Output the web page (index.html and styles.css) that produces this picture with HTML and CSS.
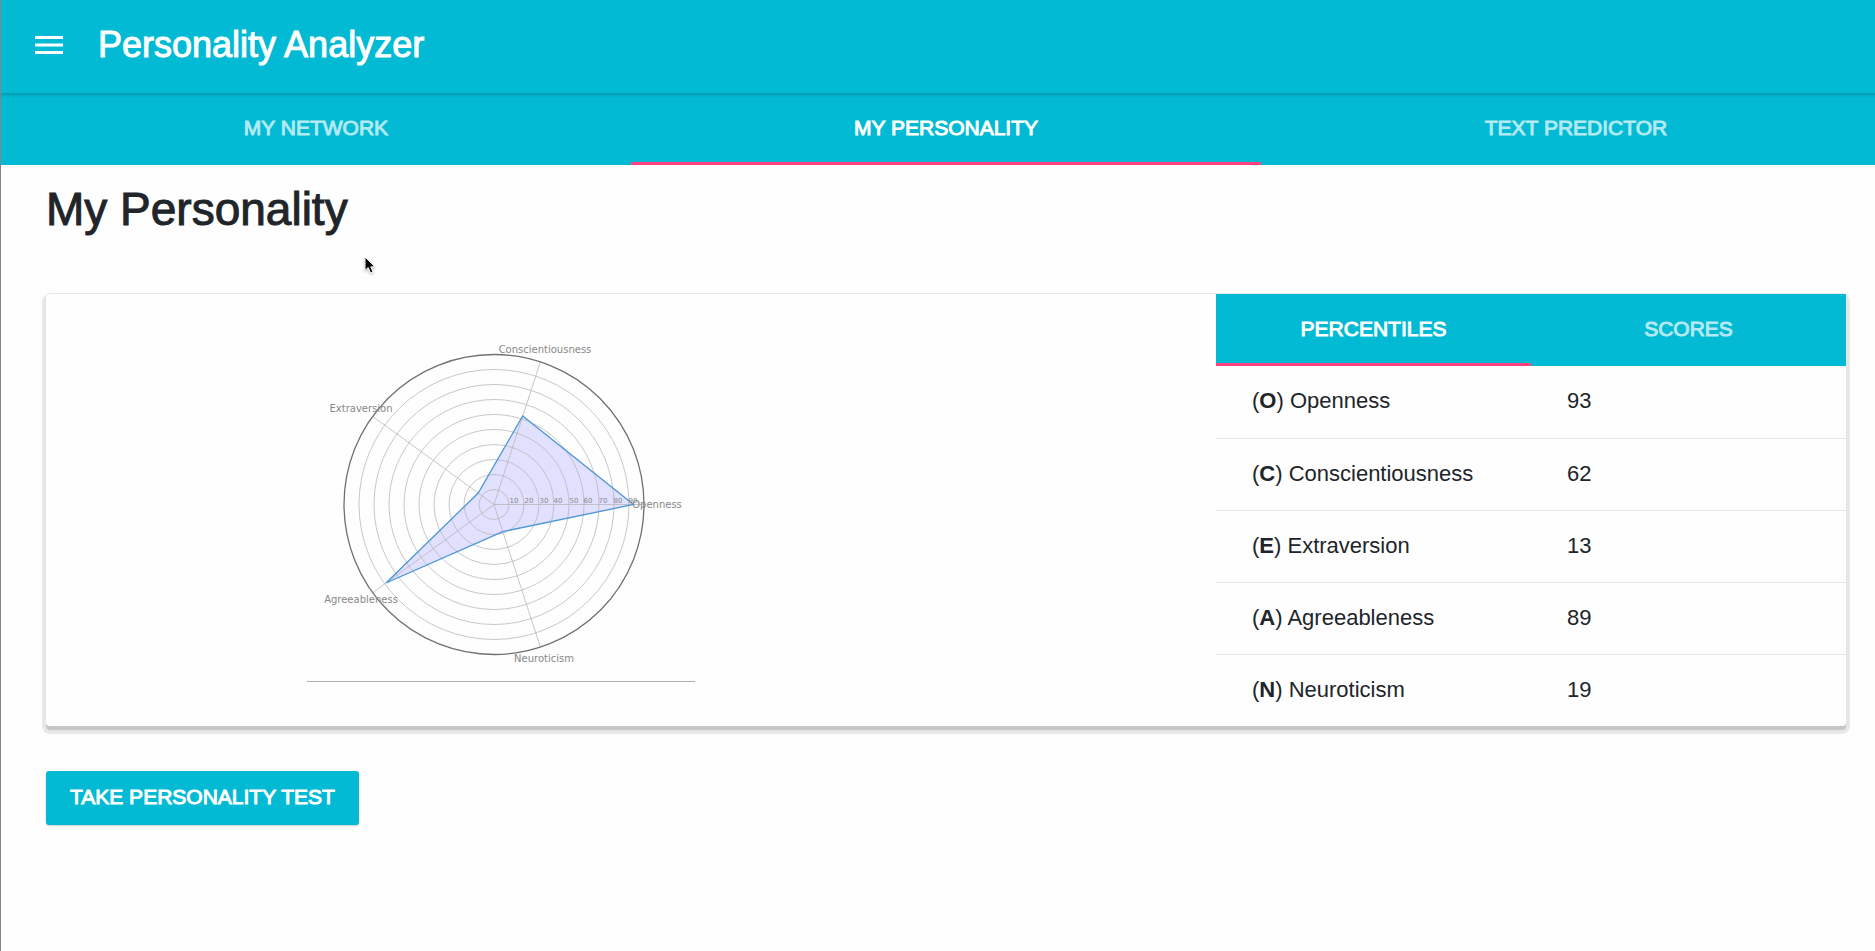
FILE: index.html
```html
<!DOCTYPE html>
<html lang="en">
<head>
<meta charset="utf-8">
<title>Personality Analyzer</title>
<link rel="stylesheet" href="styles.css">
</head>
<body>
<div class="app">
  <header class="app-bar">
    <button class="menu-button" type="button" aria-label="Menu">
      <svg width="28" height="18" viewBox="0 0 28 18" aria-hidden="true"><path d="M0 0h28v3H0zM0 7.500h28v3H0zM0 15h28v3H0z" fill="#fff"/></svg>
    </button>
    <span class="app-title">Personality Analyzer</span>
  </header>
  <nav class="tabs" role="tablist">
    <button class="tab" role="tab" type="button">MY NETWORK</button>
    <button class="tab active" role="tab" type="button" aria-selected="true">MY PERSONALITY</button>
    <button class="tab" role="tab" type="button">TEXT PREDICTOR</button>
  </nav>
  <main class="page">
    <h1 class="page-title">My Personality</h1>
    <section class="card">
      <div class="chart-pane">
        <svg class="chart" width="388" height="342" viewBox="307 340 388 342" role="img" aria-label="Personality radar chart">
          <path class="area" d="M633.500 504.500L522.700 416L478.200 493L386 583L502.800 531.600Z"/>
          <g class="grid">
            <circle cx="494" cy="504.500" r="15"/><circle cx="494" cy="504.500" r="30"/><circle cx="494" cy="504.500" r="45"/>
            <circle cx="494" cy="504.500" r="60"/><circle cx="494" cy="504.500" r="75"/><circle cx="494" cy="504.500" r="90"/>
            <circle cx="494" cy="504.500" r="105"/><circle cx="494" cy="504.500" r="120"/><circle cx="494" cy="504.500" r="135"/>
            <path d="M494 504.500H644M494 504.500L540.400 361.800M494 504.500L372.600 416.300M494 504.500L372.600 592.700M494 504.500L540.400 647.200"/>
          </g>
          <circle class="rim" cx="494" cy="504.500" r="150"/>
          <path class="outline" d="M633.500 504.500L522.700 416L478.200 493L386 583L502.800 531.600Z"/>
          <g class="ticks">
            <text x="514" y="503">10</text><text x="529" y="503">20</text><text x="544" y="503">30</text>
            <text x="558" y="503">40</text><text x="574" y="503">50</text><text x="588" y="503">60</text>
            <text x="603" y="503">70</text><text x="618" y="503">80</text><text x="633" y="503">90</text>
          </g>
          <g class="traits">
            <text x="657" y="508">Openness</text>
            <text x="545" y="353">Conscientiousness</text>
            <text x="361" y="412">Extraversion</text>
            <text x="361" y="603">Agreeableness</text>
            <text x="544" y="662">Neuroticism</text>
          </g>
          <path class="base" d="M307 681.500H695"/>
        </svg>
      </div>
      <div class="result-pane">
        <div class="tabs" role="tablist">
          <button class="tab active" role="tab" type="button" aria-selected="true">PERCENTILES</button>
          <button class="tab" role="tab" type="button">SCORES</button>
        </div>
        <table class="scores">
          <tbody>
            <tr><th scope="row">(<b>O</b>) Openness</th><td>93</td></tr>
            <tr><th scope="row">(<b>C</b>) Conscientiousness</th><td>62</td></tr>
            <tr><th scope="row">(<b>E</b>) Extraversion</th><td>13</td></tr>
            <tr><th scope="row">(<b>A</b>) Agreeableness</th><td>89</td></tr>
            <tr><th scope="row">(<b>N</b>) Neuroticism</th><td>19</td></tr>
          </tbody>
        </table>
      </div>
    </section>
    <button class="primary" type="button">TAKE PERSONALITY TEST</button>
  </main>
</div>
<svg class="pointer" width="14" height="20" viewBox="0 0 14 20" aria-hidden="true"><path d="M1 1V14.500L4.200 11.500L6.500 17L9 16L6.800 10.800H11Z" fill="#000" stroke="#fff" stroke-width="1"/></svg>
</body>
</html>
```
FILE: styles.css
```css
* { box-sizing: border-box; }

html {
  overflow: hidden;
  background: #fefefe;
}

body {
  margin: 0 -16px 0 0;
  min-height: 100vh;
  border-left: 1px solid #858585;
  color: #212529;
  font-family: "Liberation Sans", Arial, sans-serif;
  font-size: 22px;
}

button {
  border: 0;
  padding: 0;
  background: none;
  color: #fff;
  font: inherit;
}

.app-bar {
  position: relative;
  display: flex;
  align-items: center;
  gap: 35px;
  height: 93px;
  padding: 0 34px 4px;
  background: #02bad4;
  box-shadow: 0 2px 3px rgba(0, 0, 0, 0.2);
}

.menu-button { display: flex; }

.app-title {
  color: #fff;
  font-size: 36px;
  -webkit-text-stroke: 1px #fff;
}

.tabs {
  display: flex;
  background: #02bad4;
}

.tab {
  flex: 1;
  height: 72px;
  border-bottom: 3px solid transparent;
  color: #b3eaf2;
  font-size: 21px;
  -webkit-text-stroke: 1px currentColor;
}

.tab.active {
  border-bottom-color: #ff4081;
  color: #fff;
}

.page { padding: 16px 45px; }

.page-title {
  margin: 0 0 57px;
  font-size: 46px;
  font-weight: 400;
  line-height: 56px;
  -webkit-text-stroke: 1px currentColor;
}

.card {
  display: flex;
  margin-bottom: 45px;
  border-radius: 4px;
  background: #fefefe;
  box-shadow: 0 -1px 0 #e8e8e8, 0 4px 1px rgba(0, 0, 0, 0.14), 0 4px 1px 4px rgba(0, 0, 0, 0.09);
}

.chart-pane {
  width: 65%;
  padding: 46px 0 0 261px;
}

.result-pane { width: 35%; }

.chart {
  display: block;
  overflow: visible;
}

.area { fill: #e1e1ff; }
.grid { fill: none; stroke: #b0b0b0; stroke-opacity: 0.7; }
.rim { fill: none; stroke: #707070; stroke-width: 1.3; }
.outline { fill: none; stroke: #4c96d7; stroke-width: 1.3; }
.base { stroke: #b0b0b0; }

.ticks,
.traits {
  fill: #888;
  font-family: "DejaVu Sans", sans-serif;
  text-anchor: middle;
}

.ticks { font-size: 7px; }
.traits { font-size: 10px; }

.scores {
  width: 100%;
  border-spacing: 0;
  table-layout: fixed;
}

.scores th,
.scores td {
  height: 72px;
  padding: 0 0 2px 36px;
  font-weight: 400;
  text-align: left;
}

.scores tr + tr th,
.scores tr + tr td { border-top: 1px solid #e5e5e5; }

.primary {
  height: 54px;
  padding: 0 24px 2px;
  border-radius: 3px;
  background: #02bad4;
  box-shadow: 0 1px 2px rgba(0, 0, 0, 0.2);
  font-size: 21px;
  -webkit-text-stroke: 1px currentColor;
}

.pointer {
  position: absolute;
  top: 256px;
  left: 364px;
  filter: drop-shadow(0 1px 1px rgba(0, 0, 0, 0.3));
}
```
